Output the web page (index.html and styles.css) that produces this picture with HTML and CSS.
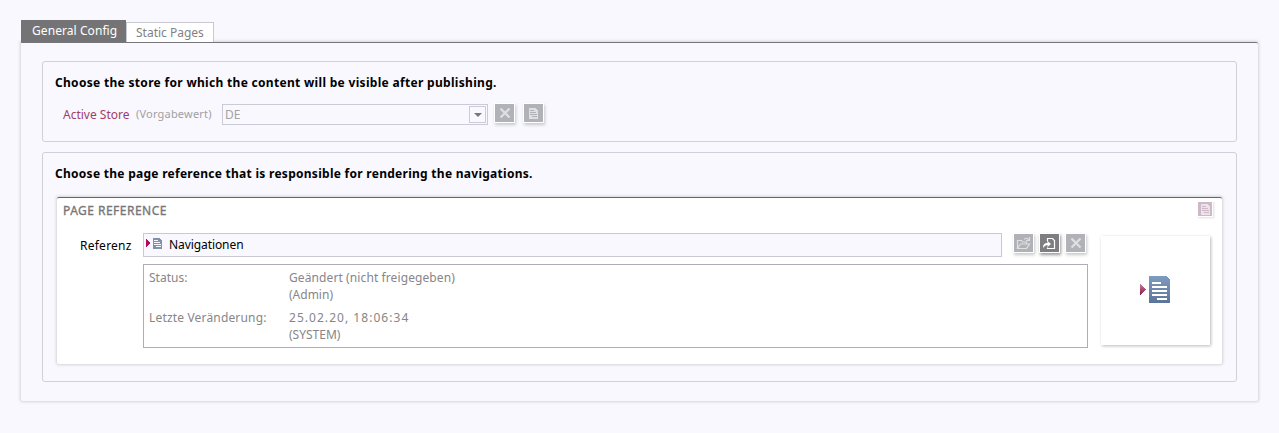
FILE: index.html
```html
<!DOCTYPE html>
<html lang="en">
<head>
<meta charset="utf-8">
<title>General Config</title>
<link rel="stylesheet" href="styles.css">
</head>
<body>
<svg class="defs" width="0" height="0" aria-hidden="true">
  <defs>
    <g id="cross"><path d="M1.500 1.500l9 9M10.500 1.500l-9 9" fill="none" stroke="#dedee3" stroke-width="2.300"/></g>
    <g id="doc" shape-rendering="crispEdges"><path d="M0 0h7v1h1v1h1v9H0z"/><path class="lines" d="M1 2h4v1H1zM1 4h6v1H1zM1 6h7v1H1zM3 8h5v1H3z"/></g>
    <linearGradient id="blue" x2="0" y2="1"><stop stop-color="#7f9bc0"/><stop offset="1" stop-color="#5b749b"/></linearGradient>
    <linearGradient id="red" x2="0" y2="1"><stop stop-color="#c4809c"/><stop offset="1" stop-color="#8d1746"/></linearGradient>
  </defs>
</svg>
<nav class="tabs">
  <div class="tab active"><span class="t-general">General Config</span></div>
  <div class="tab"><span class="t-static">Static Pages</span></div>
</nav>
<main class="panel">
  <section class="group store">
    <h2 class="h-store">Choose the store for which the content will be visible after publishing.</h2>
    <div class="row">
      <label class="name">Active Store</label><span class="hint">(Vorgabewert)</span>
      <div class="select"><span>DE</span><i class="drop"><svg width="8" height="4"><path d="M0 0h8L4 4z" fill="#77777d"/></svg></i></div>
      <button class="btn"><svg width="12" height="12"><use href="#cross"/></svg></button>
      <button class="btn gap"><svg class="pale" width="9" height="11"><use href="#doc"/></svg></button>
    </div>
  </section>
  <section class="group nav">
    <h2 class="h-nav">Choose the page reference that is responsible for rendering the navigations.</h2>
    <div class="card">
      <header class="card-head"><span class="title">PAGE REFERENCE</span><button class="mini"><svg class="pinkdoc" width="9" height="11"><use href="#doc"/></svg></button></header>
      <div class="card-body">
        <label class="ref">Referenz</label>
        <div class="fields">
          <div class="line">
            <div class="input">
              <svg class="arrow" width="4" height="8" shape-rendering="crispEdges"><path d="M0 0h1v1h1v1h1v1h1v2H3v1H2v1H1v1H0z" fill="#b5085e"/></svg>
              <svg class="bluedoc" width="9" height="11"><use href="#doc"/></svg>
              <span class="value">Navigationen</span>
            </div>
            <div class="tools">
              <button class="btn"><svg width="15" height="13" fill="none" stroke="#dedee3" stroke-width="1.200"><path d="M1.500 11.500v-8h4l1 1.500h4v2M1.500 11.500l3-4.500h9l-3 4.500zM8 2.500c1-1.500 3-2 5 .5M13.500 0v3.500H10"/></svg></button>
              <button class="btn dark"><svg width="15" height="13"><path d="M5.500 4.500v-3h5l2 2v8h-7v-1" fill="none" stroke="#fff" stroke-width="1.200"/><path d="M1 11c0-4 2-5 4.500-5V4L9 7l-3.500 3V8C4 8 2.500 9 1 11z" fill="#fff"/></svg></button>
              <button class="btn"><svg width="12" height="12"><use href="#cross"/></svg></button>
            </div>
          </div>
          <dl class="info">
            <dt>Status:</dt><dd><div class="t-changed">Geändert (nicht freigegeben)</div><div>(Admin)</div></dd>
            <dt class="t-last">Letzte Veränderung:</dt><dd><div class="t-date">25.02.20, 18:06:34</div><div>(SYSTEM)</div></dd>
          </dl>
        </div>
        <div class="preview">
          <svg width="30" height="27" shape-rendering="crispEdges"><path d="M0 8l6 5.500L0 19z" fill="url(#red)"/><path d="M9 0h18v1h1v1h1v1h1v24H9z" fill="url(#blue)"/><path d="M12 6h9v2h-9zM12 10h15v2H12zM12 14h15v2H12zM12 18h15v2H12zM17 22h10v2H17z" fill="#fff"/></svg>
        </div>
      </div>
    </div>
  </section>
</main>
</body>
</html>
```
FILE: styles.css
```css
* { box-sizing: border-box; }
body { margin: 0; padding: 20px 21px 0; height: 433px; overflow: hidden; background: #f8f8fe; font: 12px/17px "Noto Sans", "Open Sans", sans-serif; color: #000; }
.defs { display: block; height: 0; }
svg { display: block; }
button { border: 0; padding: 0; font: inherit; }
span, label, h2 { white-space: nowrap; }
.tabs { display: flex; align-items: flex-end; height: 22px; }
.tab { width: 88px; height: 20px; padding: 1px 0 0 9px; background: #fff; border: 1px solid #c9c9d1; border-bottom: 0; color: #818184; }
.tab.active { width: 105px; height: 22px; padding: 2px 0 0 11px; background: #747477; border: 0; color: #fff; }
.t-general { letter-spacing: .07px; }
.panel { width: 1237px; height: 359px; border-top: 1px solid #77777b; border-radius: 0 2px 2px 2px; padding: 18px 21px; box-shadow: 0 0 3px 1px #d4d4d6; background: #f8f8fe; display: flex; flex-direction: column; gap: 10px; }
.group { width: 1195px; border: 1px solid #ced0db; border-radius: 3px; padding: 12px 14px 0 12px; }
.store { height: 81px; }
.nav { height: 230px; }
h2 { margin: 0; font-size: 12px; line-height: 17px; font-weight: 700; }
.h-store { letter-spacing: .31px; }
.h-nav { letter-spacing: .275px; }
.row { display: flex; height: 21px; margin-top: 13px; padding-left: 8px; align-items: flex-start; }
.name { width: 73px; padding-top: 2px; color: #a33c6a; }
.hint { width: 86px; padding-top: 1px; font-size: 11px; letter-spacing: .2px; color: #a0a0a3; }
.select { display: flex; width: 266px; height: 21px; padding: 1px 1px 0 2px; border: 1px solid #cbcbd8; justify-content: space-between; color: #a3a3a5; margin-right: 6px; }
.drop { display: flex; width: 17px; height: 17px; border: 1px solid #cbcbda; align-items: center; justify-content: center; }
.btn { display: flex; flex: none; width: 21px; height: 20px; margin-top: -1px; border: 1px solid #fff; background: #b1b1b8; align-items: center; justify-content: center; box-shadow: 1px 2px 3px #c8c8cc; }
.gap { margin-left: 8px; }
.dark { background: #7e7e82; box-shadow: 1px 2px 3px #99999d; }
.pale { fill: #dedee3; color: #b1b1b8; }
.pinkdoc { fill: #ece2ea; color: #cdb8c7; }
.bluedoc { fill: #8091ad; color: #f8f8fe; }
.lines { fill: currentColor; }
.card { width: 1165px; height: 167px; margin: 15px 0 0 2px; border-top: 1px solid #66666a; border-radius: 2px; background: #fff; box-shadow: 0 0 3px 1px #d4d4d6; padding: 4px 9px 0 6px; }
.card-head { display: flex; justify-content: space-between; height: 31px; }
.title { color: #77777a; letter-spacing: .48px; -webkit-text-stroke: .35px #77777a; }
.mini { display: flex; width: 16px; height: 16px; margin-top: -1px; background: #cdb8c7; border: 1px solid #fff; box-shadow: 1px 1px 2px #dedee0; align-items: center; justify-content: center; }
.card-body { display: flex; }
.ref { width: 80px; padding: 4px 0 0 17px; letter-spacing: .25px; }
.fields { width: 945px; }
.line { display: flex; justify-content: space-between; height: 31px; }
.input { display: flex; width: 859px; height: 24px; padding: 2px 0 0 2px; border: 1px solid #c9c9d3; background: #f8f8fe; }
.arrow { margin: 3px 3px 0 0; }
.bluedoc { margin-top: 2px; }
.value { margin-left: 7px; letter-spacing: -.08px; }
.tools { display: flex; gap: 5px; margin: 1px 2px 0 0; }
.info { display: grid; grid-template-columns: 140px 1fr; row-gap: 6px; margin: 0; height: 84px; padding: 4px 5px 0; border: 1px solid #aeaeb8; align-content: start; color: #868688; }
.t-changed { letter-spacing: .1px; }
.t-last { letter-spacing: .17px; }
.t-date { letter-spacing: 1.04px; }
dd { margin: 0; }
.preview { display: flex; width: 109px; height: 109px; margin: 3px 0 0 13px; padding: 0 1px 2px 0; align-items: center; justify-content: center; box-shadow: 1px 1px 3px #b8b8ba; background: #fff; }
```
